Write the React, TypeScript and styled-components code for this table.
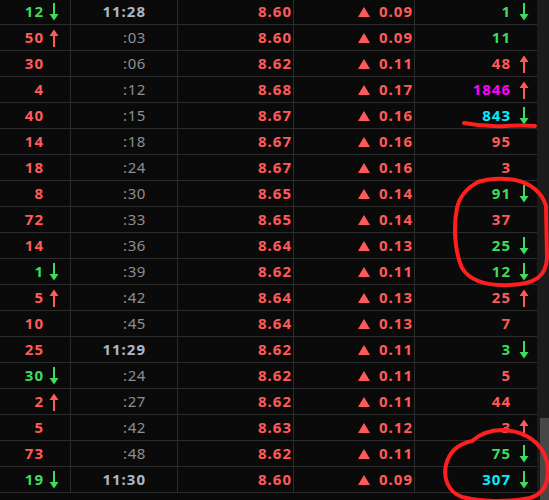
import React from "react";
import styled, { createGlobalStyle } from "styled-components";

const RED = "#ff5a5a";
const GREEN = "#3ddc5c";
const CYAN = "#00eeff";
const MAGENTA = "#ff00ff";
const LINE = "#2c2c2c";

const Global = createGlobalStyle`
  html, body { margin: 0; padding: 0; background: #0a0a0a; }
  body { font-family: "Noto Sans", "Open Sans", sans-serif; }
`;

type Tone = "r" | "g" | "c" | "m";
type Dir = "u" | "d" | undefined;

const toneColor = (t: Tone) =>
  t === "r" ? RED : t === "g" ? GREEN : t === "c" ? CYAN : MAGENTA;

interface Row {
  v1: number;
  c1: Tone;
  a1?: Dir;
  time: string;
  bold?: boolean;
  price: string;
  chg: string;
  v2: number;
  c2: Tone;
  a2?: Dir;
}

const rows: Row[] = [
  { v1: 12, c1: "g", a1: "d", time: "11:28", bold: true, price: "8.60", chg: "0.09", v2: 1, c2: "g", a2: "d" },
  { v1: 50, c1: "r", a1: "u", time: ":03", price: "8.60", chg: "0.09", v2: 11, c2: "g" },
  { v1: 30, c1: "r", time: ":06", price: "8.62", chg: "0.11", v2: 48, c2: "r", a2: "u" },
  { v1: 4, c1: "r", time: ":12", price: "8.68", chg: "0.17", v2: 1846, c2: "m", a2: "u" },
  { v1: 40, c1: "r", time: ":15", price: "8.67", chg: "0.16", v2: 843, c2: "c", a2: "d" },
  { v1: 14, c1: "r", time: ":18", price: "8.67", chg: "0.16", v2: 95, c2: "r" },
  { v1: 18, c1: "r", time: ":24", price: "8.67", chg: "0.16", v2: 3, c2: "r" },
  { v1: 8, c1: "r", time: ":30", price: "8.65", chg: "0.14", v2: 91, c2: "g", a2: "d" },
  { v1: 72, c1: "r", time: ":33", price: "8.65", chg: "0.14", v2: 37, c2: "r" },
  { v1: 14, c1: "r", time: ":36", price: "8.64", chg: "0.13", v2: 25, c2: "g", a2: "d" },
  { v1: 1, c1: "g", a1: "d", time: ":39", price: "8.62", chg: "0.11", v2: 12, c2: "g", a2: "d" },
  { v1: 5, c1: "r", a1: "u", time: ":42", price: "8.64", chg: "0.13", v2: 25, c2: "r", a2: "u" },
  { v1: 10, c1: "r", time: ":45", price: "8.64", chg: "0.13", v2: 7, c2: "r" },
  { v1: 25, c1: "r", time: "11:29", bold: true, price: "8.62", chg: "0.11", v2: 3, c2: "g", a2: "d" },
  { v1: 30, c1: "g", a1: "d", time: ":24", price: "8.62", chg: "0.11", v2: 5, c2: "r" },
  { v1: 2, c1: "r", a1: "u", time: ":27", price: "8.62", chg: "0.11", v2: 44, c2: "r" },
  { v1: 5, c1: "r", time: ":42", price: "8.63", chg: "0.12", v2: 3, c2: "r", a2: "u" },
  { v1: 73, c1: "r", time: ":48", price: "8.62", chg: "0.11", v2: 75, c2: "g", a2: "d" },
  { v1: 19, c1: "g", a1: "d", time: "11:30", bold: true, price: "8.60", chg: "0.09", v2: 307, c2: "c", a2: "d" },
];

const Page = styled.div`
  position: relative;
  width: 549px;
  height: 500px;
  overflow: hidden;
  display: flex;
  background: #0a0a0a;
`;

const Table = styled.div`
  width: 537px;
  margin-top: -1px;
  display: flex;
  flex-direction: column;
`;

const RowLine = styled.div`
  display: grid;
  grid-template-columns: 71px 107px 116px 121px 1fr;
  height: 26px;
  box-sizing: border-box;
  border-bottom: 1px solid ${LINE};
  font-size: 15px;
  font-weight: 700;
  letter-spacing: 1px;
  line-height: 25px;
`;

const Cell = styled.div<{ $pr: number; $gap?: number; $last?: boolean }>`
  display: flex;
  align-items: center;
  justify-content: flex-end;
  gap: ${(p) => p.$gap ?? 0}px;
  padding-right: ${(p) => p.$pr}px;
  border-right: ${(p) => (p.$last ? "none" : `1px solid ${LINE}`)};
  box-sizing: border-box;
  white-space: nowrap;
`;

const Num = styled.span<{ $tone: Tone }>`
  color: ${(p) => toneColor(p.$tone)};
  margin-right: -1px;
`;

const Time = styled.span<{ $bold?: boolean }>`
  color: ${(p) => (p.$bold ? "#aeb7c6" : "#8e8e8e")};
  font-weight: ${(p) => (p.$bold ? 700 : 400)};
  letter-spacing: ${(p) => (p.$bold ? "1px" : "0.6px")};
  margin-right: -1px;
`;

const Price = styled.span`
  color: ${RED};
  margin-right: -1px;
`;

const ArrowSlot = styled.span`
  width: 10px;
  height: 18px;
  display: flex;
`;

const Scrollbar = styled.div`
  width: 12px;
  height: 500px;
  background: #1b1b1b;
  display: flex;
  flex-direction: column;
  justify-content: flex-end;
`;

const Thumb = styled.div`
  width: 9px;
  height: 82px;
  margin-left: 3px;
  background: #474747;
`;

const Marks = styled.svg`
  position: absolute;
  left: 0;
  top: 0;
  pointer-events: none;
`;

const Arrow: React.FC<{ dir: Dir }> = ({ dir }) => (
  <ArrowSlot>
    {dir === "d" && (
      <svg width="10" height="18" viewBox="0 0 10 18">
        <rect x="4" y="0" width="2" height="12" fill={GREEN} />
        <polygon points="0.5,11 9.5,11 5,17.5" fill={GREEN} />
      </svg>
    )}
    {dir === "u" && (
      <svg width="10" height="18" viewBox="0 0 10 18">
        <rect x="4" y="6" width="2" height="12" fill={RED} />
        <polygon points="0.5,7 9.5,7 5,0.5" fill={RED} />
      </svg>
    )}
  </ArrowSlot>
);

const Up: React.FC = () => (
  <svg width="12" height="10" viewBox="0 0 12 10">
    <polygon points="0,10 6,0 12,10" fill={RED} />
  </svg>
);

export default function App() {
  return (
    <>
      <Global />
      <Page>
        <Table>
          {rows.map((r, i) => (
            <RowLine key={i}>
              <Cell $pr={11} $gap={6}>
                <Num $tone={r.c1}>{r.v1}</Num>
                <Arrow dir={r.a1} />
              </Cell>
              <Cell $pr={32}>
                <Time $bold={r.bold}>{r.time}</Time>
              </Cell>
              <Cell $pr={2}>
                <Price>{r.price}</Price>
              </Cell>
              <Cell $pr={2} $gap={9}>
                <Up />
                <Price>{r.chg}</Price>
              </Cell>
              <Cell $pr={8} $gap={9} $last>
                <Num $tone={r.c2}>{r.v2}</Num>
                <Arrow dir={r.a2} />
              </Cell>
            </RowLine>
          ))}
        </Table>
        <Scrollbar>
          <Thumb />
        </Scrollbar>
        <Marks width="549" height="500" viewBox="0 0 549 500">
          <g fill="none" stroke="#ff1f1f" strokeWidth="4" strokeLinecap="round" strokeLinejoin="round">
            <path d="M464 123 Q485 127 505 126 T535 126" />
            <path d="M478 182 C490 178 505 178 515 180 C530 183 542 192 546 206 L547 258 C546 276 536 284 510 285 C488 286 470 281 462 268 C455 252 453 228 457 208 C460 194 470 186 480 181" />
            <path d="M472 441 C480 434 490 430 502 430 C525 431 542 442 547 462 C550 480 546 493 530 498 C510 502 480 502 462 497 C448 492 443 478 446 465 C449 452 458 444 472 441" />
          </g>
        </Marks>
      </Page>
    </>
  );
}
